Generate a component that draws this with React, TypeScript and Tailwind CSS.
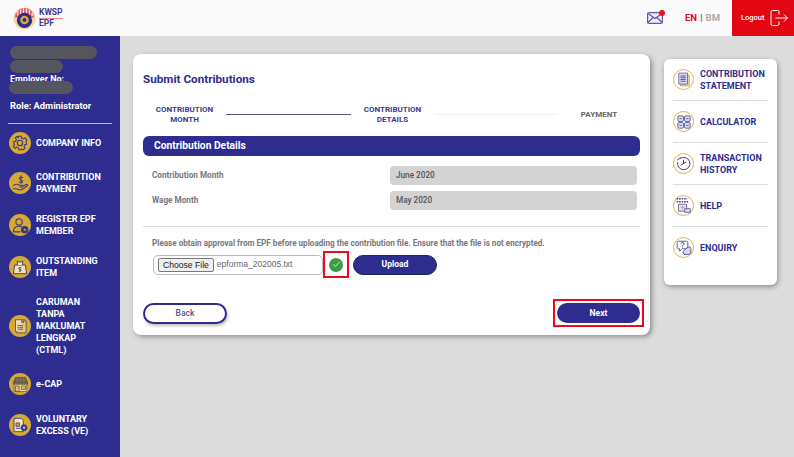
import React from 'react';
import { Check } from 'lucide-react';

const INK = '#3b3a7a';
const CREAM = '#f3e3b4';

const GearIcon = () => (
  <svg width="16" height="16" viewBox="0 0 24 24" fill="none" stroke={INK} strokeWidth="1.600">
    <path d="M10 2h4l.7 3 2.300 1 2.600-1.600 2.800 2.800L20.800 10l1 2.300-.0 1.700-2.800.7-1 2.300 1.600 2.600-2.800 2.800L14.200 21l-.7 1h-3.400l-.6-2.800-2.300-1-2.600 1.600-2.400-2.800L3.800 14.400 2.800 13V10l2.800-.7 1-2.300L5 4.400l2.800-2.400L9.400 4z" />
    <circle cx="12" cy="12" r="4" />
  </svg>
);

const PayIcon = () => (
  <svg width="17" height="17" viewBox="0 0 24 24" fill="none" stroke={INK} strokeWidth="1.500" strokeLinecap="round">
    <path d="M15 3.500c-1-1-4.500-1-4.500 1.200S15 6.500 15 8.800s-3.500 2.200-4.800 1M12.700 1v11" />
    <path d="M2 15c3-2.500 6-2 8-.5h4c1.500 0 1.500 2.500 0 2.500h-3M14 16.500l6-3c1.800-.8 2.800 1 1.500 2L14 20.500c-2 1-5 .5-8-1H2" />
  </svg>
);

const MemberIcon = () => (
  <svg width="17" height="17" viewBox="0 0 24 24" fill="none" stroke={INK} strokeWidth="1.500">
    <circle cx="10" cy="7" r="4.500" />
    <path d="M2 21c0-5 3-8 8-8 2 0 3 .5 4 1M2 21h10" />
    <circle cx="18" cy="18" r="4.500" fill={INK} />
    <circle cx="18" cy="18" r="1.500" fill="#d6a937" stroke="none" />
  </svg>
);

const BagIcon = () => (
  <svg width="16" height="16" viewBox="0 0 24 24" stroke={INK} strokeWidth="1.400">
    <path d="M4 9h16l2 13H2z" fill={CREAM} />
    <path d="M8 9V3l4 2 4-2v6" fill={CREAM} />
    <path d="M12 12v7M14 13.500c-1-1-4-.8-4 .8s4 1.200 4 2.800-3 1.700-4 .7" fill="none" strokeWidth="1.200" />
  </svg>
);

const BookIcon = () => (
  <svg width="15" height="16" viewBox="0 0 24 24" stroke={INK} strokeWidth="1.200">
    <path d="M4 2h15v19H4z" fill={CREAM} />
    <path d="M19 4h2v19H6v-2" fill="#e8c872" />
    <path d="M7 11h9M7 14h9M7 17h9" fill="none" />
    <path d="M14 2v5l1.500-1 1.500 1V2" fill="#d6a937" />
  </svg>
);

const StoreIcon = () => (
  <svg width="17" height="17" viewBox="0 0 24 24" stroke="#5c5238" strokeWidth="1.100">
    <path d="M3 11h18v11H3z" fill={CREAM} />
    <path d="M5 2h14l3 7H2z" fill="#7a7468" />
    <path d="M6 2.500 4.500 9M10 2.500 9.500 9M14 2.500l.5 6.500M18 2.500 19.500 9" fill="none" />
    <path d="M2 9h20v2.500H2z" fill="#7a7468" />
    <path d="M5 14h5v8H5zM13 14h6v5h-6z" fill="#e0c070" />
  </svg>
);

const DocGearIcon = () => (
  <svg width="16" height="16" viewBox="0 0 24 24" stroke={INK} strokeWidth="1.300">
    <path d="M3 2h11l3 3v17H3z" fill={CREAM} />
    <path d="M6 9h5v5H6zM6 17h7" fill="#d6a937" />
    <circle cx="18" cy="16" r="4.500" fill="#3f3ea0" />
    <circle cx="18" cy="16" r="1.500" fill={CREAM} stroke="none" />
  </svg>
);

const StatementIcon = () => (
  <svg width="14" height="15" viewBox="0 0 24 24" stroke="#4a4a9a" strokeWidth="1.200">
    <path d="M6 4h15v19H6z" fill="#e8d9a8" stroke="#b89a50" />
    <path d="M3 1h15v19H3z" fill="#d7d7ee" />
    <path d="M6 6h9M6 9h9M6 12h9M6 15h9" fill="none" strokeWidth="1.500" />
  </svg>
);

const CalcIcon = () => (
  <svg width="14" height="14" viewBox="0 0 24 24" stroke="#4a4a9a" strokeWidth="1.500" fill="#e6e6f4">
    <rect x="1.500" y="1.500" width="9.500" height="9.500" rx="2" />
    <rect x="13" y="1.500" width="9.500" height="9.500" rx="2" />
    <rect x="1.500" y="13" width="9.500" height="9.500" rx="2" />
    <rect x="13" y="13" width="9.500" height="9.500" rx="2" />
    <path d="M4 6.250h4.500M15.500 6.250H20M4 17.750h4.500M15.500 17.750H20" fill="none" />
  </svg>
);

const HistoryIcon = () => (
  <svg width="15" height="15" viewBox="0 0 24 24" fill="none" stroke="#3f3e92" strokeWidth="1.600" strokeLinecap="round">
    <path d="M7 3.500A10 10 0 1 1 2.500 10" />
    <path d="M2.500 6 7 3.500M12 6.500V12l-4 2.500M12 12l4-2" />
  </svg>
);

const HelpIcon = () => (
  <svg width="15" height="15" viewBox="0 0 24 24" stroke="#3f3e92" strokeWidth="1.100" fill="none">
    <path d="M1 1h17M1 6h20" strokeWidth="2.600" strokeDasharray="2.500 1.500" />
    <path d="M4 10h13v11H4z" fill="#e6e6f4" />
    <path d="M10.500 12v6M7.500 15h6" stroke="#d6a937" strokeWidth="1.500" />
    <path d="M14 17h9v6h-9z" fill="#d7d7ee" />
  </svg>
);

const EnquiryIcon = () => (
  <svg width="16" height="15" viewBox="0 0 24 24" stroke="#3f3e92" strokeWidth="1.300" fill="none">
    <path d="M3 2h13c2 0 2 1 2 2v8c0 1-.5 2-2 2H9l-4 4v-4H3c-1.500 0-2-1-2-2V4c0-1 .5-2 2-2z" fill="#fff" />
    <path d="M7 6c.5-2.500 5-2.500 5 0 0 2-2.500 1.500-2.500 4M9.500 11.500v1" strokeWidth="1.600" />
    <path d="M16 13l5-2.500 2 3V21l-3 2h-8l-2-4z" fill="#d7d7ee" />
  </svg>
);

const sideItems = [
  { icon: GearIcon, lines: ['COMPANY INFO'], cls: 'mt-[8px]' },
  { icon: PayIcon, lines: ['CONTRIBUTION', 'PAYMENT'], cls: 'mt-[17px]' },
  { icon: MemberIcon, lines: ['REGISTER EPF', 'MEMBER'], cls: 'mt-[18px]' },
  { icon: BagIcon, lines: ['OUTSTANDING', 'ITEM'], cls: 'mt-[18px]' },
  { icon: BookIcon, lines: ['CARUMAN', 'TANPA', 'MAKLUMAT', 'LENGKAP', '(CTML)'], cls: 'mt-[17px]' },
  { icon: StoreIcon, lines: ['e-CAP'], cls: 'mt-[17px]' },
  { icon: DocGearIcon, lines: ['VOLUNTARY', 'EXCESS (VE)'], cls: 'mt-[18px]' },
];

const quickLinks = [
  { icon: StatementIcon, lines: ['CONTRIBUTION', 'STATEMENT'] },
  { icon: CalcIcon, lines: ['CALCULATOR'] },
  { icon: HistoryIcon, lines: ['TRANSACTION', 'HISTORY'] },
  { icon: HelpIcon, lines: ['HELP'] },
  { icon: EnquiryIcon, lines: ['ENQUIRY'] },
];

const Scribble: React.FC<{ className: string }> = ({ className }) => (
  <div className={`relative rounded-full bg-[#55555f] ${className}`}></div>
);

const Logo = () => (
  <div className="flex items-center gap-[3px]">
    <svg width="23" height="23" viewBox="0 0 24 24">
      <circle cx="12" cy="12" r="11.500" fill="#f3d9a0" />
      <path d="M2 11a10 10 0 0 1 20 0z" fill="#e4606d" />
      <path d="M5 9V4M8 8V2.500M11 7.500V1.500M14 7.500V2M17 8V3M20 9.500V6" stroke="#fff" strokeWidth="1" />
      <circle cx="12" cy="14" r="8" fill="#2e2d8f" />
      <circle cx="12" cy="13.500" r="4.500" fill="#d9a93a" />
      <circle cx="12" cy="13.500" r="2" fill="#2e2d8f" />
    </svg>
    <div className="text-[8.500px] font-bold leading-[9.500px] text-[#3b3a96]">
      <div className="border-b border-[#e88] pb-[0.500px]">KWSP</div>
      <div>EPF</div>
    </div>
  </div>
);

const Field: React.FC<{ label: string; value: string; className?: string }> = ({ label, value, className }) => (
  <div className={`flex items-center pl-[9px] ${className ?? ''}`}>
    <div className="w-[238px] text-[8.200px] font-bold text-[#77777d]">{label}</div>
    <div className="flex h-[19px] w-[247px] items-center rounded-[4px] bg-[#d3d3d3] pl-[6px] text-[8.200px] font-medium text-[#55555a]">{value}</div>
  </div>
);

export default function App() {
  return (
    <div className="flex h-[457px] w-[794px] flex-col overflow-hidden bg-[#dcdcdc] font-['Roboto',sans-serif]">
      <header className="flex h-[36px] shrink-0 items-center bg-[#fafafa]">
        <div className="ml-[13px]"><Logo /></div>
        <div className="relative ml-auto mr-[22px]">
          <svg width="16" height="12" viewBox="0 0 16 12" fill="#eeeef8" stroke="#5b5aa8" strokeWidth="1.200">
            <rect x="0.600" y="0.600" width="14.800" height="10.800" rx="1.500" />
            <path d="M1 1.500 8 6.500l7-5M1 10.500l5-5M15 10.500l-5-5" fill="none" />
          </svg>
          <span className="absolute right-[-2px] top-[-2px] h-[6px] w-[6px] rounded-full bg-[#f01020]"></span>
        </div>
        <div className="mr-[12px] flex w-[35px] justify-between text-[9.500px] font-bold">
          <span className="text-[#e30613]">EN</span>
          <span className="text-[#55555f]">|</span>
          <span className="text-[#aaaaaa]">BM</span>
        </div>
        <div className="flex h-full w-[62px] items-center gap-[6px] bg-[#e30613] pl-[9px] text-white">
          <span className="text-[7.500px] font-medium">Logout</span>
          <svg width="18" height="16" viewBox="0 0 18 16" fill="none" stroke="currentColor" strokeWidth="1">
            <path d="M9 4.500V2a1.500 1.500 0 0 0-1.500-1.500h-5A1.500 1.500 0 0 0 1 2v12a1.500 1.500 0 0 0 1.500 1.500h5A1.500 1.500 0 0 0 9 14v-2.500" />
            <path d="M5.500 8h12M14 4.500 17.500 8 14 11.500" />
          </svg>
        </div>
      </header>

      <div className="flex min-h-0 flex-1">
        <aside className="w-[120px] shrink-0 bg-[#2e2d8f] text-white">
          <div className="px-[10px] pt-[10px]">
            <Scribble className="h-[13px] w-[87px]" />
            <Scribble className="mt-[1px] h-[13px] w-[53px]" />
            <div className="mt-[1px] text-[9px] font-bold leading-[11px]">Employer No:</div>
            <Scribble className="mt-[-4px] h-[13px] w-[64px] -translate-x-[1px]" />
            <div className="mt-[6px] text-[9.300px] font-bold leading-[12px]">Role: Administrator</div>
          </div>
          <div className="mx-[8px] mt-[11px] h-px bg-[#b4b4dc]"></div>
          {sideItems.map((item) => (
            <div key={item.lines[0]} className={`flex items-center pl-[9px] ${item.cls}`}>
              <div className="flex h-[22px] w-[22px] shrink-0 items-center justify-center rounded-full bg-[#d6a937]">
                <item.icon />
              </div>
              <div className="ml-[5px] text-[9px] font-bold leading-[12px]">
                {item.lines.map((line) => <div key={line}>{line}</div>)}
              </div>
            </div>
          ))}
        </aside>

        <main className="flex items-start pl-[13px] pt-[18px]">
          <section className="h-[281px] w-[517px] rounded-[8px] bg-white px-[10px] shadow-[2px_2px_5px_rgba(0,0,0,0.35)]">
            <h1 className="mt-[18px] text-[11.700px] font-bold leading-[14px] text-[#2e2d8f]">Submit Contributions</h1>
            <div className="mt-[19px] flex h-[19px] items-center text-center text-[8px] font-bold leading-[10px]">
              <div className="w-[83px] text-[#3b3a8f]">CONTRIBUTION<br />MONTH</div>
              <div className="h-px w-[125px] bg-[#55558f]"></div>
              <div className="w-[83px] text-[#3b3a8f]">CONTRIBUTION<br />DETAILS</div>
              <div className="h-px w-[124px] bg-[#eeeeee]"></div>
              <div className="w-[82px] text-[#66666c]">PAYMENT</div>
            </div>
            <div className="mt-[12px] flex h-[20px] items-center rounded-[6px] bg-[#2e2d8f] pl-[11px] text-[10.250px] font-bold text-white">Contribution Details</div>
            <Field className="mt-[10px]" label="Contribution Month" value="June 2020" />
            <Field className="mt-[6px]" label="Wage Month" value="May 2020" />
            <div className="mt-[16px] h-px w-full bg-[#dddddd]"></div>
            <p className="ml-[9px] mt-[11px] text-[8.150px] font-bold leading-[10px] text-[#77777d]">Please obtain approval from EPF before uploading the contribution file. Ensure that the file is not encrypted.</p>
            <div className="ml-[10px] mt-[3px] flex items-center">
              <div className="flex h-[20px] w-[170px] items-center rounded-[5px] border border-[#bbbbbb] pl-[4px] font-['Liberation_Sans',sans-serif] text-[8.500px] text-[#666666]">
                <span className="rounded-[2px] border border-[#777777] bg-[#efefef] px-[4px] text-[8.600px] leading-[12px] text-[#222222]">Choose File</span>
                <span className="ml-[3px]">epforma_202005.txt</span>
              </div>
              <div className="flex h-[27px] w-[26px] items-center justify-center border-2 border-[#ee0a1a]">
                <span className="flex h-[14px] w-[14px] items-center justify-center rounded-full bg-[#3d9b46] text-white">
                  <Check size={9} strokeWidth={2} />
                </span>
              </div>
              <button className="ml-[4px] h-[20px] w-[84px] rounded-full border border-[#1b2a55] bg-[#2e2d8f] text-[8.500px] font-bold text-white">Upload</button>
            </div>
            <div className="mt-[21px] flex items-center justify-between">
              <button className="mt-[1px] h-[21px] w-[84px] rounded-full border-2 border-[#2e2d8f] bg-white text-[8.500px] font-medium text-[#55558f] shadow-[1px_2px_3px_rgba(0,0,0,0.25)]">Back</button>
              <div className="mr-[-4px] flex h-[28px] w-[91px] items-center justify-center border-2 border-[#ee0a1a]">
                <button className="h-[20px] w-[83px] rounded-full bg-[#2e2d8f] text-[8.500px] font-bold text-white">Next</button>
              </div>
            </div>
          </section>

          <nav className="ml-[14px] mt-[5px] h-[226px] w-[113px] rounded-[6px] bg-white px-[9px] shadow-[1px_2px_5px_rgba(0,0,0,0.35)]">
            {quickLinks.map((link, i) => (
              <div key={link.lines[0]} className={`flex h-[42px] items-center border-b ${i < quickLinks.length - 1 ? 'border-[#dddddd]' : 'border-transparent'}`}>
                <div className="flex h-[21px] w-[21px] shrink-0 items-center justify-center rounded-full border-[1.500px] border-[#dcb04f]">
                  <link.icon />
                </div>
                <div className="ml-[6px] text-[9px] font-bold leading-[12px] text-[#2e2d8f]">
                  {link.lines.map((line) => <div key={line}>{line}</div>)}
                </div>
              </div>
            ))}
          </nav>
        </main>
      </div>
    </div>
  );
}
